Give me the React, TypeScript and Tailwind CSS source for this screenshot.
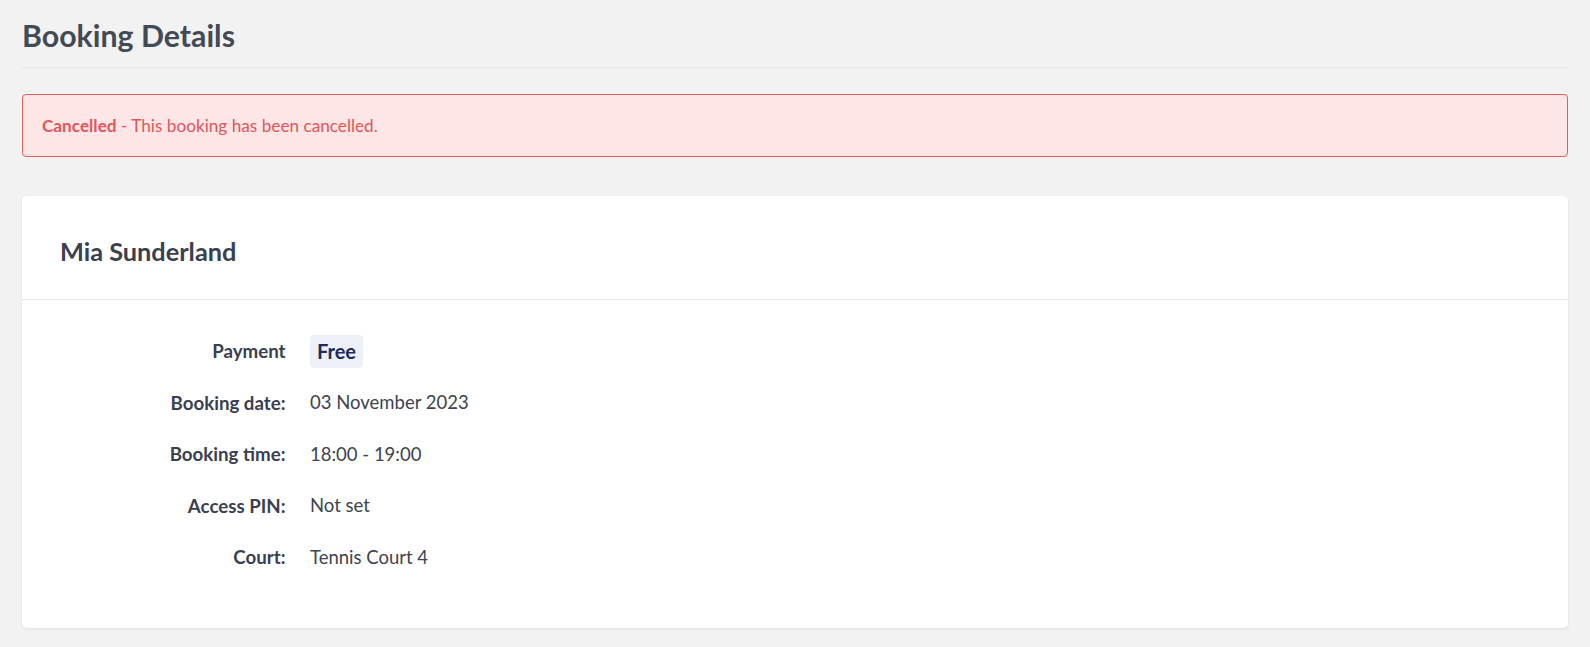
const rows: { label: string; value: string }[] = [
  { label: 'Booking date:', value: '03 November 2023' },
  { label: 'Booking time:', value: '18:00 - 19:00' },
  { label: 'Access PIN:', value: 'Not set' },
  { label: 'Court:', value: 'Tennis Court 4' },
];

export default function App() {
  return (
    <div className="min-h-screen bg-[#f2f2f2] px-[22px] font-['Lato','Liberation_Sans',sans-serif] text-[#3d4350]">
      <div className="pt-[17px] pb-[14px] border-b border-[#e6e6e6]">
        <h1 className="text-[30.3px] leading-[36px] font-bold text-[#424a54]">Booking Details</h1>
      </div>

      <div className="mt-[26px] rounded-[4px] border border-[#e35d5d] bg-[#fee6e6] px-[19px] py-[18px] text-[17.2px] leading-[25px] text-[#e2555a]">
        <span className="font-bold">Cancelled</span> - This booking has been cancelled.
      </div>

      <div className="mt-[39px] rounded-[5px] bg-white shadow-[0_1px_3px_rgba(0,0,0,0.08)]">
        <div className="px-[38px] pt-[40px] pb-[32px] border-b border-[#e5e7eb]">
          <h2 className="text-[25.3px] leading-[31px] font-bold text-[#3a4050]">Mia Sunderland</h2>
        </div>
        <div className="pt-[34.5px] pb-[53.5px]">
          <div className="flex items-center h-[34px]">
            <div className="w-[263.5px] text-right text-[18.7px] font-bold text-[#3a3f51]">Payment</div>
            <div className="ml-[24.5px]">
              <span className="inline-block rounded-[4px] bg-[#edf0f7] px-[7px] py-[3px] text-[20px] leading-[27px] font-bold text-[#1e2c5c]">Free</span>
            </div>
          </div>
          {rows.map((r) => (
            <div key={r.label} className="flex items-center h-[34px] mt-[17.5px]">
              <div className="w-[263.5px] text-right text-[18.7px] font-bold text-[#3a3f51]">{r.label}</div>
              <div className="ml-[24.5px] text-[18.5px] text-[#3d4350]">{r.value}</div>
            </div>
          ))}
        </div>
      </div>
    </div>
  );
}
